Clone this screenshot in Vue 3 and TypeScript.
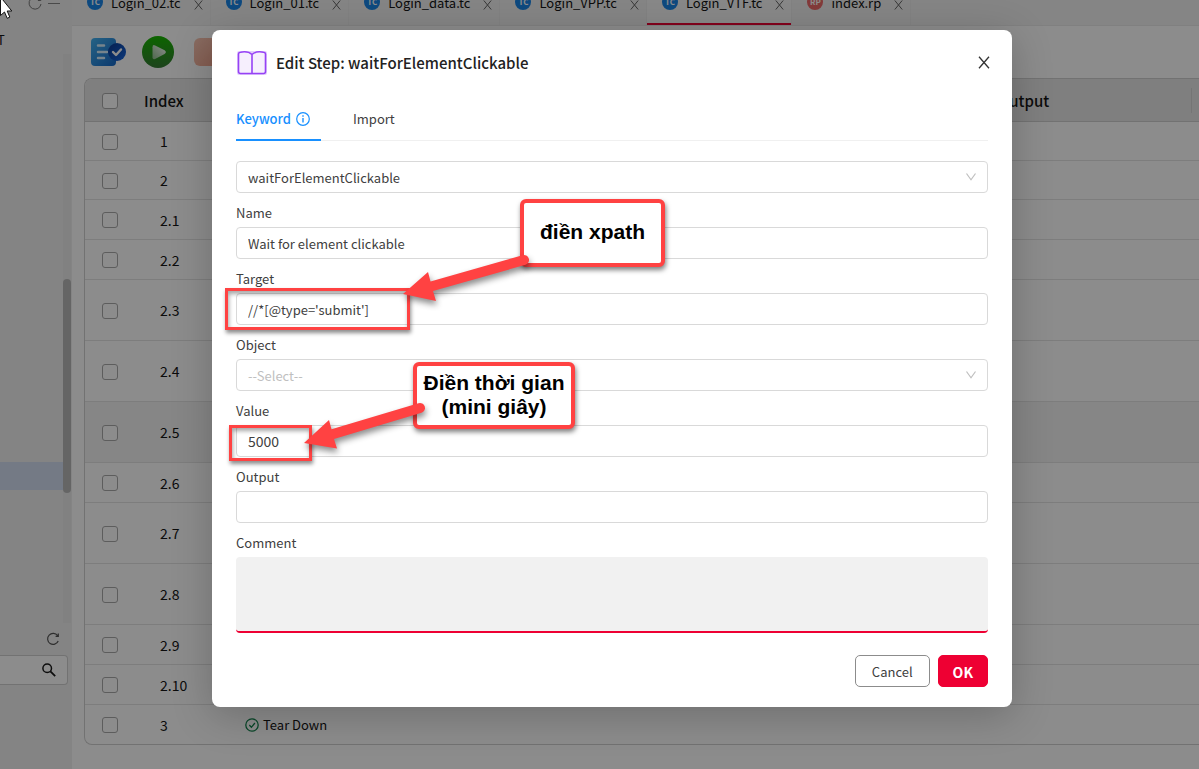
<script setup lang="ts">
import { ref } from 'vue'

interface FileTab { name: string; kind: 'TC' | 'RP'; active?: boolean }
interface Step { index: string; size: 'small' | 'normal' | 'tall'; active?: boolean; keyword?: string }

const tabs: FileTab[] = [
  { name: 'Login_02.tc', kind: 'TC' },
  { name: 'Login_01.tc', kind: 'TC' },
  { name: 'Login_data.tc', kind: 'TC' },
  { name: 'Login_VPP.tc', kind: 'TC' },
  { name: 'Login_VTF.tc', kind: 'TC', active: true },
  { name: 'index.rp', kind: 'RP' },
]

const steps: Step[] = [
  { index: '1', size: 'small' },
  { index: '2', size: 'small' },
  { index: '2.1', size: 'normal' },
  { index: '2.2', size: 'normal' },
  { index: '2.3', size: 'tall' },
  { index: '2.4', size: 'tall' },
  { index: '2.5', size: 'tall', active: true },
  { index: '2.6', size: 'normal' },
  { index: '2.7', size: 'tall' },
  { index: '2.8', size: 'tall' },
  { index: '2.9', size: 'normal' },
  { index: '2.10', size: 'normal' },
  { index: '3', size: 'small', keyword: 'Tear Down' },
]

const keyword = ref('waitForElementClickable')
const name = ref('Wait for element clickable')
const target = ref("//*[@type='submit']")
const object = ref('')
const value = ref('5000')
const output = ref('')
const comment = ref('')
</script>

<template>
  <div class="app">
    <aside class="sidebar">
      <div class="side-tools">
        <svg width="14" height="14" viewBox="0 0 14 14"><path d="M12.3 4.2A6 6 0 1 0 13 8M12.8 1.6v2.9H9.9" fill="none" stroke="#777" /></svg>
        <svg width="12" height="14" viewBox="0 0 12 14"><path d="M0 7.500h12" stroke="#888" /></svg>
      </div>
      <div class="side-label">T</div>
      <div class="tree">
        <div class="tree-body"><div class="tree-selected"></div></div>
        <div class="track"><div class="thumb"></div></div>
      </div>
      <div class="side-refresh">
        <svg width="14" height="14" viewBox="0 0 14 14"><path d="M11.6 3.7A5.5 5.5 0 1 0 12.2 9M12.3 1.6v2.7H9.6" fill="none" stroke="#555" stroke-width="1.200" /></svg>
      </div>
      <div class="side-search">
        <svg width="16" height="16" viewBox="0 0 16 16"><g fill="none" stroke="#1a1a1a"><circle cx="6.2" cy="6.2" r="4.3" stroke-width="1.5" /><path d="M9.4 9.4l4.8 4.8" stroke-width="1.8" /></g></svg>
      </div>
    </aside>

    <main class="content">
      <nav class="file-tabs">
        <a v-for="tab in tabs" :key="tab.name" href="#" class="file-tab" :class="{ active: tab.active }">
          <span class="badge" :class="{ report: tab.kind === 'RP' }">{{ tab.kind }}</span>
          <span class="file-name">{{ tab.name }}</span>
          <svg class="file-close" width="9" height="10" viewBox="0 0 9 10"><path d="M.8.5l7.4 9M8.2.5l-7.4 9" fill="none" stroke="#666" /></svg>
        </a>
      </nav>

      <div class="toolbar">
        <button class="tool" type="button" aria-label="Test case">
          <svg width="36" height="32" viewBox="0 0 36 32">
            <defs>
              <linearGradient id="doc" x1="0" y1="0" x2="1" y2="1"><stop offset="0" stop-color="#45b4f2" /><stop offset="1" stop-color="#1668c8" /></linearGradient>
              <linearGradient id="tick" x1="0" y1="0" x2="1" y2="1"><stop offset="0" stop-color="#0a3a90" /><stop offset="1" stop-color="#1767e0" /></linearGradient>
            </defs>
            <rect x="1" y="2" width="25" height="28" rx="4" fill="url(#doc)" />
            <path d="M8 9.500h6M8 16h9M8 22h6" stroke="#d8f1ff" stroke-width="2.500" stroke-linecap="round" />
            <circle cx="27" cy="16" r="9" fill="url(#tick)" />
            <path d="M23 16l3 3 5-5.500" fill="none" stroke="#fff" stroke-width="2.400" stroke-linecap="round" stroke-linejoin="round" />
          </svg>
        </button>
        <button class="tool" type="button" aria-label="Run">
          <svg width="32" height="32" viewBox="0 0 32 32">
            <defs>
              <linearGradient id="run" x1="0" y1="0" x2="0" y2="1"><stop offset="0" stop-color="#18b800" /><stop offset="1" stop-color="#357a35" /></linearGradient>
              <linearGradient id="play" x1="0" y1="1" x2="1" y2="0"><stop offset="0" stop-color="#8fbf8c" /><stop offset="1" stop-color="#fff" /></linearGradient>
            </defs>
            <circle cx="16" cy="16" r="16" fill="url(#run)" />
            <path d="M10.500 11.200q0-3 2.600-1.800l9.500 4.800q2.600 1.800 0 3.800l-9.500 5q-2.600 1.200-2.600-1.800z" fill="url(#play)" />
          </svg>
        </button>
        <button class="tool stop" type="button" aria-label="Stop"></button>
      </div>

      <div class="table-frame">
        <table class="steps">
          <colgroup><col class="c-check" /><col class="c-index" /><col class="c-keyword" /><col /><col class="c-output" /><col class="c-end" /></colgroup>
          <thead>
            <tr>
              <th><input type="checkbox" aria-label="Select all" /></th>
              <th>Index</th>
              <th></th>
              <th></th>
              <th class="resizable">Output</th>
              <th></th>
            </tr>
          </thead>
          <tbody>
            <tr v-for="step in steps" :key="step.index" :class="[step.size, { current: step.active }]">
              <td><input type="checkbox" :aria-label="'Select step ' + step.index" /></td>
              <td class="index">{{ step.index }}</td>
              <td>
                <span v-if="step.keyword" class="keyword">
                  <svg width="14" height="14" viewBox="0 0 14 14"><g fill="none" stroke="#12824c" stroke-width="1.300"><circle cx="7" cy="7" r="6.200" /><path d="M4.300 7l2.100 2.300 3.500-4.300" /></g></svg>
                  {{ step.keyword }}
                </span>
              </td>
              <td></td>
              <td></td>
              <td></td>
            </tr>
          </tbody>
        </table>
      </div>
    </main>

    <div class="backdrop">
      <form class="modal" role="dialog" aria-labelledby="dialog-title" @submit.prevent>
        <header class="modal-head">
          <svg width="32" height="26" viewBox="0 0 32 26">
            <path d="M3 3H29V23H3Z" fill="#f6effd" stroke="#e3cffc" stroke-width="4" stroke-linejoin="round" />
            <path d="M2.500 4Q2.500 2.500 4.500 2.200Q12 .8 16 4.500Q20 .8 27.500 2.200Q29.500 2.500 29.500 4V21.500Q29.500 23.500 27.500 23.500H4.500Q2.500 23.500 2.500 21.500ZM16 4.500V23.500" fill="#f6effd" stroke="#9642f5" stroke-width="1.600" stroke-linejoin="round" />
          </svg>
          <h1 id="dialog-title">Edit Step: waitForElementClickable</h1>
          <button class="close" type="button" aria-label="Close">
            <svg width="12" height="13" viewBox="0 0 12 13"><path d="M1 .8l10 11.400M11 .8L1 12.200" fill="none" stroke="#333" stroke-width="1.300" /></svg>
          </button>
        </header>

        <nav class="modal-tabs">
          <a href="#" class="modal-tab active">
            Keyword
            <svg width="14" height="14" viewBox="0 0 14 14"><circle cx="7" cy="7" r="6.300" fill="none" stroke="#1890ff" stroke-width="1.200" /><path d="M7 6v4.500M7 3.300v1.400" stroke="#1890ff" stroke-width="1.400" /></svg>
          </a>
          <a href="#" class="modal-tab">Import</a>
        </nav>

        <div class="select-wrap">
          <select v-model="keyword" aria-label="Keyword">
            <option>waitForElementClickable</option>
          </select>
          <svg class="chevron" width="12" height="12" viewBox="0 0 12 12"><path d="M1.500 2.500L6 8.800l4.500-6.300" fill="none" stroke="#bfbfbf" stroke-width="1.200" /></svg>
        </div>
        <label for="name">Name</label>
        <input id="name" v-model="name" type="text" />
        <label for="target">Target</label>
        <input id="target" v-model="target" type="text" />
        <label for="object">Object</label>
        <div class="select-wrap">
          <select id="object" v-model="object" class="empty">
            <option value="">--Select--</option>
          </select>
          <svg class="chevron" width="12" height="12" viewBox="0 0 12 12"><path d="M1.500 2.500L6 8.800l4.500-6.300" fill="none" stroke="#bfbfbf" stroke-width="1.200" /></svg>
        </div>
        <label for="value">Value</label>
        <input id="value" v-model="value" class="numeric" type="text" />
        <label for="output">Output</label>
        <input id="output" v-model="output" type="text" />
        <label for="comment">Comment</label>
        <textarea id="comment" v-model="comment"></textarea>

        <footer class="modal-foot">
          <button class="btn" type="button">Cancel</button>
          <button class="btn primary" type="submit">OK</button>
        </footer>

        <div class="mark mark-target"></div>
        <div class="mark mark-value"></div>
        <div class="callout callout-target">điền xpath</div>
        <div class="callout callout-value">Điền thời gian<br />(mini giây)</div>
        <svg class="arrows" width="480" height="480" viewBox="212 30 480 480">
          <g fill="#ff4242">
            <path d="M403 294L428 272L430.500 281.500L522.500 255.200A5 5 0 0 1 525.500 264.800L433 291L436 301Z" />
            <path d="M304 443L329 420L331.500 429.300L418.500 403.200A5 5 0 0 1 421.500 412.800L334 439L337 448.500Z" />
          </g>
        </svg>
      </form>
    </div>

    <svg class="pointer" width="14" height="20" viewBox="0 0 14 20"><path d="M.5-3V15.500L4.500 12l2.700 6.300 2.600-1.200L7.200 11h4.600z" fill="#fff" stroke="#111" /></svg>
  </div>
</template>

<style>
html, body, #app { height: 100%; }
body { overflow: hidden; }
</style>

<style scoped>
* { box-sizing: border-box; }
.app {
  position: relative;
  display: flex;
  height: 100%;
  overflow: hidden;
  background: #fff;
  color: #141414;
  font-family: "Noto Sans CJK SC", "Noto Sans", sans-serif;
  font-size: 13px;
  line-height: 22px;
}
a { color: inherit; text-decoration: none; }
button, input, select, textarea { font: inherit; color: inherit; }
svg { display: block; flex: none; }

.sidebar { flex: 0 0 72px; display: flex; flex-direction: column; background: #f0f0f0; }
.side-tools { display: flex; gap: 6px; align-items: flex-start; justify-content: flex-end; height: 29px; padding-right: 12px; margin-top: -4px; }
.side-label { height: 29px; line-height: 30px; margin-left: -3px; }
.tree { flex: 0 1 569px; display: flex; }
.tree-body { flex: 1; padding-top: 408px; }
.tree-selected { height: 28px; background: #d3def3; }
.track { width: 8px; margin-right: 1px; padding-top: 225px; background: #ebebeb; }
.thumb { height: 214px; border-radius: 4px; background: #b9b9b9; }
.side-refresh { display: flex; align-items: center; justify-content: flex-end; height: 32px; padding-right: 12px; }
.side-search { display: flex; align-items: center; justify-content: flex-end; height: 30px; margin-right: 4px; padding-right: 10px; border: 1px solid #d0d0d0; border-left: 0; border-radius: 0 4px 4px 0; background: #fff; }

.content { flex: 1; min-width: 0; }
.file-tabs { display: flex; align-items: flex-end; height: 26px; overflow: hidden; background: #f2f2f2; border-bottom: 1px solid #eaeaea; }
.file-tab { display: flex; flex: none; align-items: center; height: 48px; margin-bottom: -1px; padding: 0 7px 0 15px; border-right: 1px solid #ededed; }
.file-tab.active { box-shadow: inset 0 -3px #ee0033; background: #f7f7f7; }
.badge { width: 16px; height: 16px; margin-right: 8px; border-radius: 50%; background: #1a86e8; color: #fff; font-size: 8px; font-weight: 700; line-height: 16px; text-align: center; }
.badge.report { background: #ee6a6a; }
.file-name { padding-top: 2px; }
.file-close { margin-left: 13px; margin-top: 5px; }

.toolbar { display: flex; gap: 16px; align-items: center; height: 52px; padding: 0 18px; }
.tool { padding: 0; border: 0; background: none; }
.stop { width: 32px; height: 28px; margin-left: 4px; border-radius: 6px; background: linear-gradient(135deg, #f8c5b2, #ef9f88); }

.table-frame { margin-left: 12px; overflow: hidden; border: 1px solid #cfcfcf; border-right: 0; border-radius: 8px 0 0 8px; }
.steps { width: 100%; table-layout: fixed; border-collapse: separate; border-spacing: 0; }
.c-check { width: 51px; }
.c-index { width: 101px; }
.c-keyword { width: 200px; }
.c-output { width: 202px; }
.c-end { width: 7px; }
th, td { padding: 0 8px; text-align: left; vertical-align: middle; border-bottom: 1px solid #e4e4e4; }
th { position: relative; height: 43px; padding-top: 2px; background: #e8e8e8; border-color: #cfcfcf; font-size: 15px; font-weight: 500; }
th:first-child, td:first-child { padding: 1px 0 0 17px; }
.resizable::after { content: ""; position: absolute; right: 0; top: 9px; height: 25px; border-right: 1px solid #d5d5d5; }
.small td { height: 39px; }
.normal td { height: 40px; }
.tall td { height: 61px; }
.current td { background: #f5f5f5; }
tr:last-child td { border-bottom: 0; }
td.index { padding-left: 24px; font-size: 14px; }
.keyword { display: flex; align-items: center; gap: 4px; }
input[type="checkbox"] { display: block; appearance: none; width: 16px; height: 16px; margin: 0; border: 1px solid #aaa; border-radius: 3px; background: #fff; }

.backdrop { position: absolute; inset: 0; display: flex; align-items: flex-start; justify-content: center; padding: 30px 0 0 25px; background: rgba(0, 0, 0, .45); }
.modal { position: relative; width: 800px; padding: 20px 24px; border-radius: 8px; background: #fff; color: #404040; box-shadow: 0 8px 40px rgba(0, 0, 0, .22); }
.modal-head { display: flex; align-items: center; gap: 8px; height: 26px; }
h1 { flex: 1; margin: 0; color: #222; font-size: 15px; font-weight: 500; line-height: 24px; }
.close { display: flex; align-items: center; justify-content: center; width: 22px; height: 24px; margin: 0 -7px 2px 0; padding: 0; border: 0; background: none; }
.modal-tabs { display: flex; gap: 32px; margin: 21px 0 20px; border-bottom: 1px solid #f0f0f0; }
.modal-tab { display: flex; align-items: center; height: 44px; margin-bottom: -1px; }
.modal-tab.active { gap: 5px; padding: 2px 11px 0 0; border-bottom: 2px solid #1890ff; color: #1890ff; font-weight: 500; }
.select-wrap { position: relative; }
.chevron { position: absolute; right: 11px; top: 10px; pointer-events: none; }
input[type="text"], select { display: block; appearance: none; width: 100%; height: 32px; padding: 0 11px; border: 1px solid #d9d9d9; border-radius: 4px; background: #fff; outline: 0; }
select { padding-top: 2px; }
input.numeric { font-size: 14px; }
.empty { color: #bfbfbf; }
label { display: block; height: 34px; padding-top: 9px; }
textarea { display: block; width: 100%; height: 76px; padding: 8px 11px; border: 0; border-bottom: 2px solid #ee0033; border-radius: 4px; background: #f1f1f1; outline: 0; resize: none; }
.modal-foot { display: flex; justify-content: flex-end; gap: 8px; margin-top: 22px; }
.btn { height: 32px; padding: 2px 16px 0; border: 1px solid #8c8c8c; border-radius: 5px; background: #fff; }
.btn.primary { padding: 2px 14px 0; border-color: #ee0033; background: #ee0033; color: #fff; font-size: 14px; font-weight: 700; }

.mark { position: absolute; border: 3px solid #ff4242; box-shadow: 1px 3px 4px rgba(0, 0, 0, .45), inset 1px 3px 4px rgba(0, 0, 0, .35); pointer-events: none; }
.mark-target { left: 13px; top: 258px; width: 185px; height: 42px; }
.mark-value { left: 17px; top: 395px; width: 83px; height: 36px; }
.callout { position: absolute; display: flex; align-items: center; justify-content: center; padding-bottom: 2px; border: 4px solid #ff4242; border-radius: 6px; background: #fff; color: #000; font: 700 21px/24px "Liberation Sans", Arial, sans-serif; text-align: center; white-space: nowrap; box-shadow: 1px 3px 5px rgba(0, 0, 0, .5); }
.callout-target { left: 308px; top: 169px; width: 145px; height: 68px; }
.callout-value { left: 201px; top: 332px; width: 162px; height: 67px; }
.arrows { position: absolute; left: 0; top: 0; pointer-events: none; filter: drop-shadow(1px 4px 3px rgba(0, 0, 0, .45)); }
.pointer { position: absolute; left: 0; top: 0; }
</style>
